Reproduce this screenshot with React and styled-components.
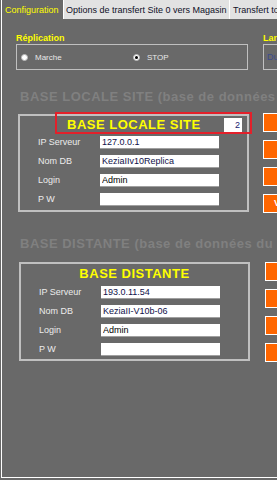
import styled, { createGlobalStyle } from "styled-components";

const GlobalStyle = createGlobalStyle`
  html, body {
    margin: 0;
    padding: 0;
    background: #696969;
    overflow: hidden;
  }
  body {
    font-family: "Liberation Sans", Arial, sans-serif;
  }
`;

const Screen = styled.div`
  width: 460px;
  height: 480px;
  display: flex;
  flex-direction: column;
`;

const TabBar = styled.div`
  display: flex;
  height: 19px;
  flex: none;
`;

const Tab = styled.div`
  box-sizing: border-box;
  height: 19px;
  width: ${(p) => p.$w}px;
  margin-left: ${(p) => (p.$first ? 1 : 0)}px;
  padding: 5px 0 0 ${(p) => p.$pad}px;
  border-left: 1px solid #ffffff;
  font-size: 9px;
  line-height: 11px;
  white-space: nowrap;
  overflow: hidden;
  color: ${(p) => (p.$active ? "#ffff00" : "#101028")};
  background: ${(p) => (p.$active ? "#696969" : "#e2e2e2")};
`;

const Frame = styled.div`
  box-sizing: border-box;
  height: 459px;
  margin-left: 1px;
  padding: 14px 0 0 14px;
  border-left: 1px solid #ffffff;
  border-bottom: 1px solid #ffffff;
`;

const TopRow = styled.div`
  display: flex;
  gap: 15px;
`;

const Group = styled.div`
  width: ${(p) => p.$w}px;
  flex: none;
`;

const GroupLabel = styled.div`
  font-size: 9px;
  line-height: 11px;
  font-weight: bold;
  color: #ffff00;
  white-space: nowrap;
`;

const GroupBox = styled.div`
  box-sizing: border-box;
  height: 26px;
  border: 1px solid #c0c0c0;
  display: flex;
  align-items: center;
  padding-left: ${(p) => p.$pad}px;
  font-size: 8px;
  white-space: nowrap;
  overflow: hidden;
`;

const RadioOption = styled.label`
  display: flex;
  align-items: center;
  gap: 7px;
  width: ${(p) => p.$w}px;
  color: #e8e8e8;
  font-size: 8px;
`;

const RadioDot = styled.span`
  box-sizing: border-box;
  width: 7px;
  height: 7px;
  border-radius: 50%;
  background: #ffffff;
  border: 1px solid #b8b8b8;
  display: flex;
  align-items: center;
  justify-content: center;

  &::after {
    content: "";
    width: 3px;
    height: 3px;
    border-radius: 50%;
    background: ${(p) => (p.$checked ? "#000000" : "transparent")};
  }
`;

const MutedText = styled.span`
  color: #3e4c8e;
  font-size: 9px;
`;

const Heading = styled.div`
  margin: ${(p) => p.$top}px 0 0 4px;
  font-size: 13px;
  line-height: 16px;
  font-weight: bold;
  letter-spacing: 0.5px;
  color: #808080;
  white-space: nowrap;
`;

const SectionRow = styled.div`
  display: flex;
  align-items: flex-start;
  margin-top: ${(p) => p.$top}px;
`;

const Panel = styled.div`
  box-sizing: border-box;
  width: 231px;
  height: ${(p) => p.$h}px;
  margin-left: ${(p) => p.$left}px;
  padding: ${(p) => p.$padTop}px 0 0 0;
  border: 2px solid #c0c0c0;
  display: flex;
  flex-direction: column;
  flex: none;
`;

const RedTitleBox = styled.div`
  box-sizing: border-box;
  height: 22px;
  margin: -4px -5px 0 35px;
  padding: 2px 8px 0 10px;
  border: 2px solid #e3202a;
  display: flex;
  align-items: flex-start;
  justify-content: space-between;
`;

const PanelTitle = styled.div`
  margin-top: ${(p) => p.$top || 0}px;
  font-size: 13px;
  line-height: 16px;
  font-weight: bold;
  letter-spacing: 0.5px;
  color: #ffff00;
  text-align: ${(p) => p.$align || "left"};
  white-space: nowrap;
`;

const SiteNumber = styled.input`
  box-sizing: border-box;
  width: 18px;
  height: 14px;
  margin-top: 2px;
  padding: 0 2px 0 0;
  border: none;
  background: #ffffff;
  font-family: "Liberation Sans", Arial, sans-serif;
  font-size: 9px;
  color: #1a1a70;
  text-align: right;
  outline: none;
`;

const Fields = styled.div`
  display: grid;
  row-gap: 6px;
  margin-top: ${(p) => p.$top}px;
  padding-left: 18px;
`;

const FieldRow = styled.div`
  display: flex;
  align-items: center;
`;

const FieldLabel = styled.span`
  width: 62px;
  font-size: 9px;
  line-height: 11px;
  color: #ececec;
  white-space: nowrap;
`;

const FieldInput = styled.input`
  box-sizing: border-box;
  width: 119px;
  height: 13px;
  padding: 0 2px;
  border: none;
  border-bottom: 1px solid #a0a0a0;
  background: #ffffff;
  font-family: "Liberation Sans", Arial, sans-serif;
  font-size: 9px;
  color: ${(p) => (p.$dark ? "#000000" : "#10104a")};
  outline: none;
`;

const ButtonColumn = styled.div`
  display: flex;
  flex-direction: column;
  gap: 8px;
  margin: ${(p) => p.$top}px 0 0 ${(p) => p.$left}px;
`;

const OrangeButton = styled.div`
  box-sizing: border-box;
  width: 70px;
  height: 19px;
  padding-left: 10px;
  background: #ff6600;
  border: 1px solid #ffffff;
  color: #ffffff;
  font-size: 9px;
  font-weight: bold;
  line-height: 17px;
  white-space: nowrap;
`;

function Field({ label, value, dark }) {
  return (
    <FieldRow>
      <FieldLabel>{label}</FieldLabel>
      <FieldInput readOnly value={value} $dark={dark} />
    </FieldRow>
  );
}

export default function App() {
  return (
    <>
      <GlobalStyle />
      <Screen>
        <TabBar>
          <Tab $first $active $w={62} $pad={3}>Configuration</Tab>
          <Tab $w={166} $pad={2}>Options de transfert Site 0 vers Magasin</Tab>
          <Tab $w={120} $pad={3}>Transfert totaux</Tab>
        </TabBar>

        <Frame>
          <TopRow>
            <Group $w={232}>
              <GroupLabel>Réplication</GroupLabel>
              <GroupBox $pad={4}>
                <RadioOption $w={112}>
                  <RadioDot />
                  Marche
                </RadioOption>
                <RadioOption $w={100}>
                  <RadioDot $checked />
                  STOP
                </RadioOption>
              </GroupBox>
            </Group>
            <Group $w={140}>
              <GroupLabel>Lancement</GroupLabel>
              <GroupBox $pad={3}>
                <MutedText>Du lundi au vendredi</MutedText>
              </GroupBox>
            </Group>
          </TopRow>

          <Heading $top={19}>BASE LOCALE SITE (base de données du site)</Heading>
          <SectionRow $top={9}>
            <Panel $h={98} $left={2} $padTop={0}>
              <RedTitleBox>
                <PanelTitle $top={1}>BASE LOCALE SITE</PanelTitle>
                <SiteNumber readOnly value="2" />
              </RedTitleBox>
              <Fields $top={2}>
                <Field label="IP Serveur" value="127.0.0.1" />
                <Field label="Nom DB" value="KeziaIIv10Replica" />
                <Field label="Login" value="Admin" dark />
                <Field label="P W" value="" />
              </Fields>
            </Panel>
            <ButtonColumn $top={-1} $left={14}>
              <OrangeButton />
              <OrangeButton />
              <OrangeButton />
              <OrangeButton>Valider</OrangeButton>
            </ButtonColumn>
          </SectionRow>

          <Heading $top={23}>BASE DISTANTE (base de données du magasin)</Heading>
          <SectionRow $top={10}>
            <Panel $h={99} $left={3} $padTop={2}>
              <PanelTitle $align="center">BASE DISTANTE</PanelTitle>
              <Fields $top={4}>
                <Field label="IP Serveur" value="193.0.11.54" />
                <Field label="Nom DB" value="KeziaII-V10b-06" />
                <Field label="Login" value="Admin" dark />
                <Field label="P W" value="" />
              </Fields>
            </Panel>
            <ButtonColumn $top={0} $left={15}>
              <OrangeButton />
              <OrangeButton />
              <OrangeButton />
              <OrangeButton />
            </ButtonColumn>
          </SectionRow>
        </Frame>
      </Screen>
    </>
  );
}
